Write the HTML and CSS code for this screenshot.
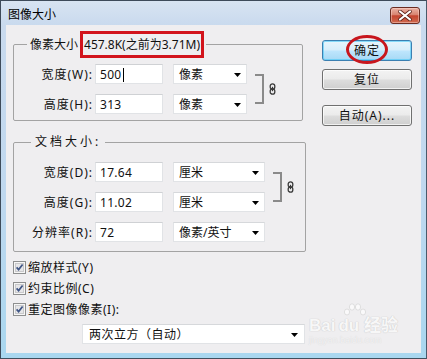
FILE: index.html
```html
<!DOCTYPE html>
<html lang="zh">
<head>
<meta charset="utf-8">
<title>图像大小</title>
<link rel="stylesheet" href="styles.css">
</head>
<body>
<div class="window">
  <div class="titlebar">
    <span class="title">图像大小</span>
    <div class="close">
      <svg width="14" height="11" viewBox="0 0 14 11"><path d="M2 1.5 L12 9.5 M12 1.5 L2 9.5" stroke="#5a1f18" stroke-width="3.6" stroke-linecap="round"/><path d="M2 1.5 L12 9.5 M12 1.5 L2 9.5" stroke="#ffffff" stroke-width="2.2" stroke-linecap="round"/></svg>
    </div>
  </div>
  <div class="content">
    <div class="main">
      <fieldset class="group group-pixel">
        <legend class="legend legend-pixel">像素大小<span class="mark-box">457.8K(之前为3.71M)</span></legend>
        <div class="group-body">
          <div class="fields">
            <div class="row">
              <span class="label">宽度(W):</span>
              <div class="input">500<span class="caret"></span></div>
              <div class="select select-narrow"><span>像素</span><svg width="7" height="4" viewBox="0 0 7 4"><path d="M0 0h7L3.5 4z"/></svg></div>
            </div>
            <div class="row">
              <span class="label">高度(H):</span>
              <div class="input">313</div>
              <div class="select select-narrow"><span>像素</span><svg width="7" height="4" viewBox="0 0 7 4"><path d="M0 0h7L3.5 4z"/></svg></div>
            </div>
          </div>
          <div class="link">
            <span class="bracket"></span>
            <svg class="chain" width="7" height="12" viewBox="0 0 7 12"><rect x="1.2" y="0.8" width="4.6" height="5.4" rx="2.3" fill="none" stroke="#3a3a3a" stroke-width="1.3"/><rect x="1.2" y="5.8" width="4.6" height="5.4" rx="2.3" fill="none" stroke="#3a3a3a" stroke-width="1.3"/><path d="M3.5 3.8v4.4" stroke="#3a3a3a" stroke-width="1.2"/></svg>
          </div>
        </div>
      </fieldset>

      <fieldset class="group group-doc">
        <legend class="legend legend-doc">文档大小:</legend>
        <div class="group-body">
          <div class="fields">
            <div class="row">
              <span class="label">宽度(D):</span>
              <div class="input">17.64</div>
              <div class="select select-mid"><span>厘米</span><svg width="7" height="4" viewBox="0 0 7 4"><path d="M0 0h7L3.5 4z"/></svg></div>
            </div>
            <div class="row">
              <span class="label">高度(G):</span>
              <div class="input">11.02</div>
              <div class="select select-mid"><span>厘米</span><svg width="7" height="4" viewBox="0 0 7 4"><path d="M0 0h7L3.5 4z"/></svg></div>
            </div>
            <div class="row">
              <span class="label">分辨率(R):</span>
              <div class="input">72</div>
              <div class="select select-mid"><span>像素/英寸</span><svg width="7" height="4" viewBox="0 0 7 4"><path d="M0 0h7L3.5 4z"/></svg></div>
            </div>
          </div>
          <div class="link">
            <span class="bracket"></span>
            <svg class="chain" width="7" height="12" viewBox="0 0 7 12"><rect x="1.2" y="0.8" width="4.6" height="5.4" rx="2.3" fill="none" stroke="#3a3a3a" stroke-width="1.3"/><rect x="1.2" y="5.8" width="4.6" height="5.4" rx="2.3" fill="none" stroke="#3a3a3a" stroke-width="1.3"/><path d="M3.5 3.8v4.4" stroke="#3a3a3a" stroke-width="1.2"/></svg>
          </div>
        </div>
      </fieldset>

      <div class="checks">
        <div class="check"><svg width="13" height="13" viewBox="0 0 13 13"><rect x="0.5" y="0.5" width="12" height="12" fill="#f6f6f6" stroke="#8e8f8f"/><rect x="2.5" y="2.5" width="8" height="8" fill="#e6e6e8" stroke="#c9c9cb"/><path d="M3.6 6.4 L5.6 8.6 L9.6 3.4" fill="none" stroke="#3f5585" stroke-width="1.7"/></svg><span>缩放样式(Y)</span></div>
        <div class="check"><svg width="13" height="13" viewBox="0 0 13 13"><rect x="0.5" y="0.5" width="12" height="12" fill="#f6f6f6" stroke="#8e8f8f"/><rect x="2.5" y="2.5" width="8" height="8" fill="#e6e6e8" stroke="#c9c9cb"/><path d="M3.6 6.4 L5.6 8.6 L9.6 3.4" fill="none" stroke="#3f5585" stroke-width="1.7"/></svg><span>约束比例(C)</span></div>
        <div class="check"><svg width="13" height="13" viewBox="0 0 13 13"><rect x="0.5" y="0.5" width="12" height="12" fill="#f6f6f6" stroke="#8e8f8f"/><rect x="2.5" y="2.5" width="8" height="8" fill="#e6e6e8" stroke="#c9c9cb"/><path d="M3.6 6.4 L5.6 8.6 L9.6 3.4" fill="none" stroke="#3f5585" stroke-width="1.7"/></svg><span>重定图像像素(I):</span></div>
      </div>

      <div class="select select-wide"><span>两次立方（自动）</span><svg width="7" height="4" viewBox="0 0 7 4"><path d="M0 0h7L3.5 4z"/></svg></div>
    </div>

    <div class="buttons">
      <div class="btn btn-default">确定<span class="mark-ellipse"></span></div>
      <div class="btn btn-reset">复位</div>
      <div class="btn btn-auto">自动(A)...</div>
    </div>
  </div>

  <div class="watermark">
    <svg class="paw" width="26" height="16" viewBox="0 0 26 16"><g fill="#fff" stroke="#cfcfcf" stroke-width="0.8"><ellipse cx="5" cy="9" rx="2.6" ry="3"/><ellipse cx="10" cy="4" rx="2.6" ry="3.2"/><ellipse cx="16" cy="4" rx="2.6" ry="3.2"/><ellipse cx="21" cy="9" rx="2.6" ry="3"/></g></svg>
    <div class="wm-main">Bai<span class="wm-du">du</span> 经验</div>
    <div class="wm-url">jingyan.baidu.com</div>
  </div>
</div>
</body>
</html>
```

FILE: styles.css
```css
* { box-sizing: border-box; }

html, body {
  margin: 0;
  padding: 0;
  background: #ffffff;
}

body {
  font-family: "Noto Sans", "Noto Sans CJK SC", sans-serif;
  font-size: 12px;
  line-height: 15px;
  color: #111;
}

.window {
  position: relative;
  width: 427px;
  height: 359px;
  display: flex;
  flex-direction: column;
  border: 1px solid #3e4b5a;
  border-right-color: #4a5a6a;
  border-bottom-color: #40505e;
  padding: 0 5px 5px 5px;
  background: linear-gradient(to bottom, #d8e4f2 0, #c9daee 24px, #bfd8ef 55%, #a9d7ef 100%);
}

.titlebar {
  height: 24px;
  display: flex;
  justify-content: space-between;
  align-items: flex-start;
}

.title {
  padding: 6px 0 0 2px;
  font-size: 12px;
  line-height: 15px;
  color: #000;
}

.close {
  width: 30px;
  height: 17px;
  margin-top: 6px;
  margin-right: 1px;
  border: 1px solid #6a2c22;
  border-radius: 3px;
  background: linear-gradient(to bottom, #eab2a5 0, #d98370 45%, #c4442f 52%, #d06a4f 100%);
  box-shadow: inset 0 0 0 1px rgba(255, 220, 210, 0.45);
  display: flex;
  align-items: center;
  justify-content: center;
}

.content {
  flex: 1;
  display: flex;
  padding: 6px 9px 0 7px;
  background: #efeef0;
  gap: 16px;
}

.main {
  width: 293px;
  display: flex;
  flex-direction: column;
}

.group {
  margin: 0;
  border: 1px solid #a3a3a3;
  border-radius: 2px;
  min-width: 0;
}

.group-pixel {
  width: 290px;
  padding: 6px 0 6px 0;
}

.group-doc {
  width: 293px;
  margin-top: 13px;
  padding: 12px 0 9px 0;
}

.legend {
  padding: 0;
  display: flex;
  align-items: center;
}

.legend-pixel {
  margin-left: 13px;
  padding: 0 2px 0 3px;
}

.legend-doc {
  margin-left: 17px;
  padding: 0 4px 0 4px;
  line-height: 16px;
  letter-spacing: 3px;
}

.mark-box {
  margin-left: 2px;
  border: 3px solid #d2141c;
  padding: 3px 1px 3px 1px;
  line-height: 15px;
  white-space: nowrap;
}

.group-body {
  display: flex;
  align-items: flex-start;
}

.fields {
  display: flex;
  flex-direction: column;
  gap: 10px;
}

.row {
  display: flex;
  align-items: center;
  height: 20px;
}

.label {
  width: 79px;
  margin-right: 2px;
  text-align: right;
  white-space: nowrap;
  letter-spacing: 1px;
}

.input {
  width: 68px;
  height: 20px;
  padding: 1px 0 0 4px;
  background: #fff;
  border: 1px solid #e1e3e6;
  border-top-color: #cfd1d4;
  display: flex;
  align-items: center;
  letter-spacing: 0.3px;
}

.caret {
  width: 1px;
  height: 14px;
  margin-left: 1px;
  background: #000;
}

.select {
  height: 20px;
  margin-left: 10px;
  padding: 1px 5px 0 5px;
  background: #fff;
  border: 1px solid #e1e3e6;
  border-top-color: #d6d8db;
  display: flex;
  align-items: center;
  justify-content: space-between;
  white-space: nowrap;
}

.select svg { fill: #000; flex: none; }

.select-narrow { width: 74px; }
.select-mid { width: 92px; }

.select-wide {
  width: 223px;
  margin-left: 69px;
  margin-top: 4px;
  padding-left: 6px;
  padding-right: 6px;
  letter-spacing: 0.5px;
}

.link {
  height: 30px;
  margin-top: 10px;
  margin-left: 8px;
  display: flex;
  align-items: center;
}

.bracket {
  width: 9px;
  height: 30px;
  border: 2px solid #8a8a8a;
  border-left: 0;
}

.chain {
  margin-left: 5px;
}

.checks {
  margin-top: 5px;
  display: flex;
  flex-direction: column;
}

.check {
  height: 21px;
  display: flex;
  align-items: center;
  gap: 2px;
  letter-spacing: 0.5px;
}

.buttons {
  width: 90px;
  padding-top: 9px;
  display: flex;
  flex-direction: column;
}

.btn {
  position: relative;
  height: 21px;
  border: 1px solid #707070;
  border-radius: 3px;
  background: linear-gradient(to bottom, #f3f3f3 0, #ebebeb 48%, #dddddd 52%, #cfcfcf 100%);
  box-shadow: inset 0 0 0 1px rgba(255, 255, 255, 0.7);
  display: flex;
  align-items: center;
  justify-content: center;
  line-height: 15px;
  color: #111;
  letter-spacing: 1px;
}

.btn-default {
  border-color: #3c7fb1;
  background: linear-gradient(to bottom, #e8f5fc 0, #d8eefb 48%, #bee6fd 52%, #a7d9f5 100%);
  box-shadow: inset 0 0 0 1px rgba(72, 200, 246, 0.6);
}

.btn-reset { margin-top: 8px; }
.btn-auto { margin-top: 15px; }

.mark-ellipse {
  position: absolute;
  left: 23px;
  top: -6px;
  width: 42px;
  height: 29px;
  border: 3px solid #c8161d;
  border-radius: 50%;
}

.watermark {
  position: absolute;
  left: 308px;
  top: 302px;
  width: 92px;
  color: #fff;
  opacity: 0.7;
}

.paw {
  position: absolute;
  left: 33px;
  top: 0;
}

.wm-main {
  margin-top: 14px;
  font-family: "Liberation Sans", "Noto Sans CJK SC", sans-serif;
  font-size: 17px;
  line-height: 18px;
  font-weight: bold;
  color: #fbfbfb;
  text-shadow: 0 0 1px #c0c0c0, 0 0 1px #c0c0c0;
}

.wm-du {
  margin-left: 3px;
}

.wm-url {
  font-family: "Liberation Sans", sans-serif;
  font-size: 9px;
  line-height: 11px;
  color: #f4f4f4;
  text-shadow: 0 0 1px #c8c8c8;
}
```
